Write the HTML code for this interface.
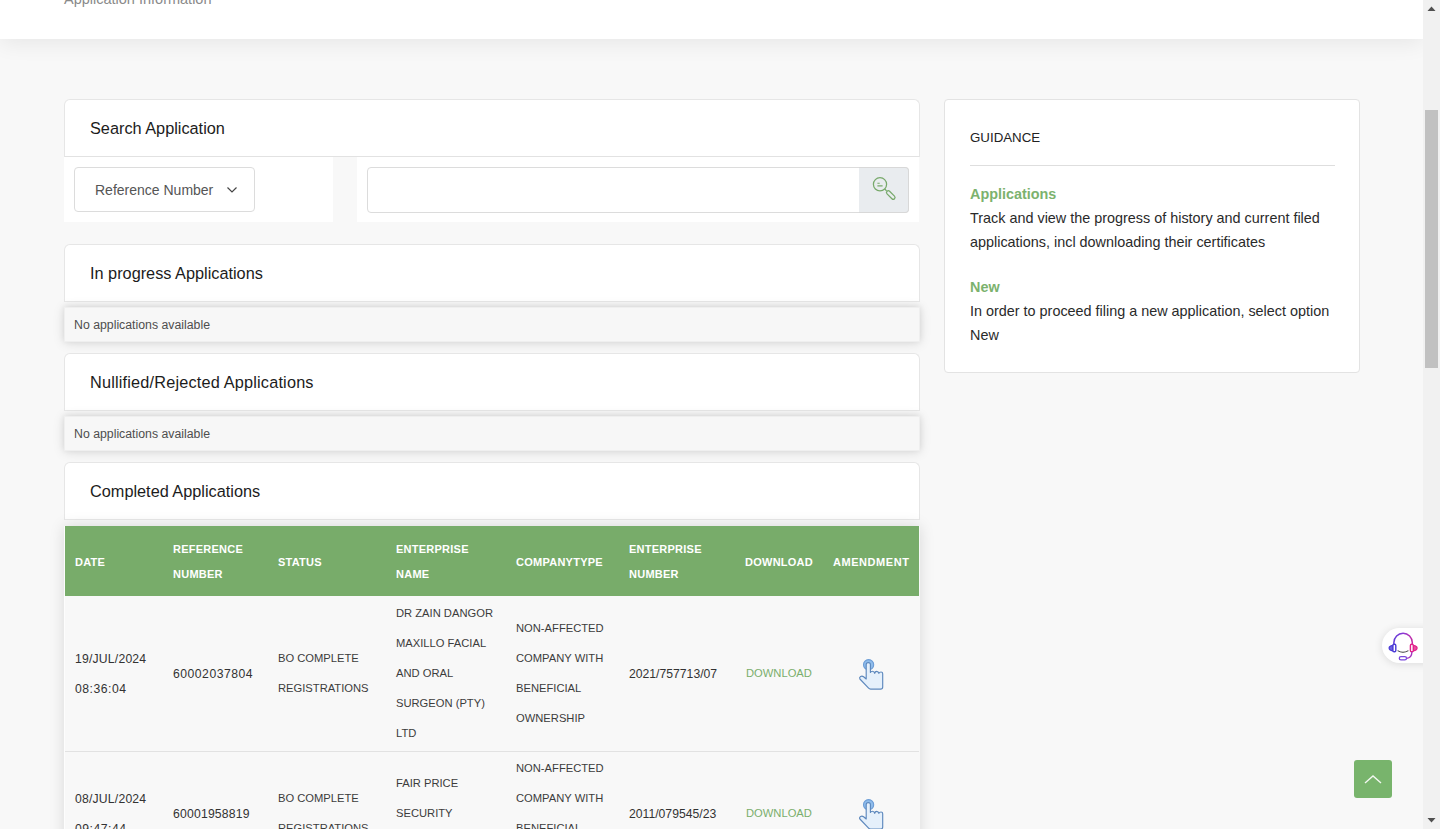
<!DOCTYPE html>
<html><head><meta charset="utf-8">
<style>
html,body{margin:0;padding:0;}
body{width:1440px;height:829px;overflow:hidden;position:relative;background:#f8f8f8;font-family:"Liberation Sans",sans-serif;color:#222;}
.abs{position:absolute;}
.t{position:absolute;white-space:nowrap;line-height:1;}
#hdr{left:0;top:0;width:1423px;height:39px;background:#fff;box-shadow:0 4px 22px rgba(0,0,0,0.075);}
.card{position:absolute;background:#fff;border:1px solid #e6e6e6;border-radius:6px 6px 0 0;box-sizing:border-box;}
.strip{position:absolute;background:#f7f7f7;box-shadow:0 1px 12px rgba(0,0,0,0.13),0 -1px 6px rgba(0,0,0,0.07);border:1px solid #efefef;box-sizing:border-box;}
.h{font-size:16.3px;color:#1c1c1c;}
.na{font-size:12.3px;color:#4e4e4e;}
.th{position:absolute;white-space:nowrap;line-height:1;font-size:11px;font-weight:700;color:#fff;letter-spacing:0.25px;}
.td{position:absolute;white-space:nowrap;line-height:1;font-size:12.2px;color:#333;}
.dg{letter-spacing:0.5px;}
.dt{letter-spacing:0.2px;}
.tu{position:absolute;white-space:nowrap;line-height:1;font-size:11.2px;color:#3c3c3c;}
.dl{color:#7aae6c;}
.gb{font-size:14.4px;font-weight:700;color:#7cb26e;}
.gt{font-size:14.4px;color:#2a2a2a;}
#sb{left:1423px;top:0;width:17px;height:829px;background:#f1f1f1;}
</style></head><body>

<div id="hdr" class="abs"><div class="t" style="left:64px;top:-8px;font-size:14.5px;color:#8a8a8a;">Application Information</div></div>

<!-- Search Application card -->
<div class="card" style="left:64px;top:99px;width:856px;height:58px;border-bottom-color:#e2e2e2;"></div>
<div class="t h" style="left:90px;top:120px;">Search Application</div>
<div class="abs" style="left:64px;top:157px;width:269px;height:65px;background:#fff;"></div>
<div class="abs" style="left:357px;top:157px;width:562px;height:65px;background:#fff;"></div>
<div class="abs" style="left:74px;top:167px;width:181px;height:45px;border:1px solid #dcdcdc;border-radius:4px;box-sizing:border-box;background:#fff;"></div>
<div class="t" style="left:95px;top:183px;font-size:14px;color:#555;">Reference Number</div>
<svg class="abs" style="left:226px;top:185px;" width="12" height="10" viewBox="0 0 12 10"><path d="M1.5 2.5 L6 7 L10.5 2.5" fill="none" stroke="#454545" stroke-width="1.2"/></svg>
<div class="abs" style="left:367px;top:167px;width:542px;height:46px;border:1px solid #dcdcdc;border-radius:4px;box-sizing:border-box;background:#fff;"></div>
<div class="abs" style="left:859px;top:167px;width:50px;height:46px;border:1px solid #d8d8d8;border-left:none;border-radius:0 4px 4px 0;box-sizing:border-box;background:#e9ecef;"></div>
<svg class="abs" style="left:862px;top:166px;" width="36" height="36" viewBox="0 0 36 36">
<circle cx="18" cy="18.3" r="6.6" fill="none" stroke="#78a96b" stroke-width="1.25"/>
<path d="M15.4 17.2h2.3 M15.4 19.9h5.2" stroke="#78a96b" stroke-width="1.1"/>
<path d="M22.7 23 L24.6 24.9" stroke="#78a96b" stroke-width="1.25"/>
<rect x="23.5" y="27.2" width="10.5" height="3.6" rx="1.8" transform="rotate(45 28.75 29)" fill="none" stroke="#78a96b" stroke-width="1.25"/>
</svg>

<!-- In progress -->
<div class="card" style="left:64px;top:244px;width:856px;height:58px;border-bottom-color:#e8e8e8;"></div>
<div class="t h" style="left:90px;top:265px;">In progress Applications</div>
<div class="strip" style="left:64px;top:307px;width:856px;height:35px;"></div>
<div class="t na" style="left:74px;top:319px;">No applications available</div>

<!-- Nullified -->
<div class="card" style="left:64px;top:353px;width:856px;height:58px;border-bottom-color:#e8e8e8;"></div>
<div class="t h" style="left:90px;top:374px;letter-spacing:0.18px;">Nullified/Rejected Applications</div>
<div class="strip" style="left:64px;top:416px;width:856px;height:35px;"></div>
<div class="t na" style="left:74px;top:428px;">No applications available</div>

<!-- Completed -->
<div class="card" style="left:64px;top:462px;width:856px;height:58px;border-bottom-color:#e8e8e8;"></div>
<div class="t h" style="left:90px;top:483px;">Completed Applications</div>

<!-- Guidance -->
<div class="abs" style="left:944px;top:99px;width:416px;height:274px;background:#fff;border:1px solid #e3e3e3;border-radius:4px;box-sizing:border-box;"></div>
<div class="t" style="left:970px;top:131px;font-size:13.3px;color:#222;">GUIDANCE</div>
<div class="abs" style="left:970px;top:165px;width:365px;height:1px;background:#dedede;"></div>


<!-- Table -->
<div class="abs" style="left:64px;top:526px;width:856px;height:320px;background:#f8f8f8;box-shadow:0 0 14px rgba(0,0,0,0.13);border-left:1px solid #fdfdfd;box-sizing:border-box;"></div>
<div class="abs" style="left:65px;top:526px;width:854px;height:70px;background:#78ac6a;"></div>
<div class="th" style="left:75px;top:557px;">DATE</div>
<div class="th" style="left:173px;top:544px;">REFERENCE</div>
<div class="th" style="left:173px;top:569px;">NUMBER</div>
<div class="th" style="left:278px;top:557px;">STATUS</div>
<div class="th" style="left:396px;top:544px;">ENTERPRISE</div>
<div class="th" style="left:396px;top:569px;">NAME</div>
<div class="th" style="left:516px;top:557px;">COMPANYTYPE</div>
<div class="th" style="left:629px;top:544px;">ENTERPRISE</div>
<div class="th" style="left:629px;top:569px;">NUMBER</div>
<div class="th" style="left:745px;top:557px;">DOWNLOAD</div>
<div class="th" style="left:833px;top:557px;letter-spacing:0.55px;">AMENDMENT</div>
<div class="abs" style="left:65px;top:751px;width:854px;height:1px;background:#e2e2e2;"></div>

<div class="td dt" style="left:75px;top:653px;">19/JUL/2024</div>
<div class="td dg" style="left:75px;top:683px;">08:36:04</div>
<div class="td dg" style="left:173px;top:668px;">60002037804</div>
<div class="tu" style="left:278px;top:653px;">BO COMPLETE</div>
<div class="tu" style="left:278px;top:683px;">REGISTRATIONS</div>
<div class="tu" style="left:396px;top:608px;">DR ZAIN DANGOR</div>
<div class="tu" style="left:396px;top:638px;">MAXILLO FACIAL</div>
<div class="tu" style="left:396px;top:668px;">AND ORAL</div>
<div class="tu" style="left:396px;top:698px;">SURGEON (PTY)</div>
<div class="tu" style="left:396px;top:728px;">LTD</div>
<div class="tu" style="left:516px;top:623px;">NON-AFFECTED</div>
<div class="tu" style="left:516px;top:653px;">COMPANY WITH</div>
<div class="tu" style="left:516px;top:683px;">BENEFICIAL</div>
<div class="tu" style="left:516px;top:713px;">OWNERSHIP</div>
<div class="td" style="left:629px;top:668px;">2021/757713/07</div>
<div class="tu dl" style="left:746px;top:668px;">DOWNLOAD</div>
<svg class="abs" style="left:855px;top:655px;" width="32" height="38" viewBox="0 0 32 38">
<circle cx="13.6" cy="9.7" r="5.1" fill="#8fbdec" stroke="#6d9dd6" stroke-width="1.1"/>
<path d="M15.4 17.3 L15.4 9.6 Q15.4 7.6 13.3 7.6 Q11.2 7.6 11.2 9.6 L11.2 24 L8.6 21.7 Q7.2 20.6 5.6 21.4 Q4 22.4 4.9 24 L13.6 33.2 Q14.4 34.1 15.6 34.1 L25.5 34.1 Q27.7 34.1 27.7 31.9 L27.7 18.7 Q27.7 17 26 17 Q24.3 17 23.9 18.4 Q23.5 16.3 21.7 16.3 Q20 16.3 19.7 18.3 Q19.3 16.2 17.5 16.2 Q15.8 16.2 15.4 17.5 Z" fill="#e5f0fb" stroke="#5d88bd" stroke-width="1.15" stroke-linejoin="round"/>
</svg>

<div class="td dt" style="left:75px;top:793px;">08/JUL/2024</div>
<div class="td dg" style="left:75px;top:823px;">09:47:44</div>
<div class="td" style="left:173px;top:808px;letter-spacing:0.2px;">60001958819</div>
<div class="tu" style="left:278px;top:793px;">BO COMPLETE</div>
<div class="tu" style="left:278px;top:823px;">REGISTRATIONS</div>
<div class="tu" style="left:396px;top:778px;">FAIR PRICE</div>
<div class="tu" style="left:396px;top:808px;">SECURITY</div>
<div class="tu" style="left:516px;top:763px;">NON-AFFECTED</div>
<div class="tu" style="left:516px;top:793px;">COMPANY WITH</div>
<div class="tu" style="left:516px;top:823px;">BENEFICIAL</div>
<div class="td" style="left:629px;top:808px;">2011/079545/23</div>
<div class="tu dl" style="left:746px;top:808px;">DOWNLOAD</div>
<svg class="abs" style="left:855px;top:795px;" width="32" height="38" viewBox="0 0 32 38">
<circle cx="13.6" cy="9.7" r="5.1" fill="#8fbdec" stroke="#6d9dd6" stroke-width="1.1"/>
<path d="M15.4 17.3 L15.4 9.6 Q15.4 7.6 13.3 7.6 Q11.2 7.6 11.2 9.6 L11.2 24 L8.6 21.7 Q7.2 20.6 5.6 21.4 Q4 22.4 4.9 24 L13.6 33.2 Q14.4 34.1 15.6 34.1 L25.5 34.1 Q27.7 34.1 27.7 31.9 L27.7 18.7 Q27.7 17 26 17 Q24.3 17 23.9 18.4 Q23.5 16.3 21.7 16.3 Q20 16.3 19.7 18.3 Q19.3 16.2 17.5 16.2 Q15.8 16.2 15.4 17.5 Z" fill="#e5f0fb" stroke="#5d88bd" stroke-width="1.15" stroke-linejoin="round"/>
</svg>

<div class="t gb" style="left:970px;top:187px;">Applications</div>
<div class="t gt" style="left:970px;top:211px;">Track and view the progress of history and current filed</div>
<div class="t gt" style="left:970px;top:235px;">applications, incl downloading their certificates</div>
<div class="t gb" style="left:970px;top:280px;">New</div>
<div class="t gt" style="left:970px;top:304px;">In order to proceed filing a new application, select option</div>
<div class="t gt" style="left:970px;top:328px;">New</div>

<div class="abs" style="left:1382px;top:628px;width:60px;height:35px;background:#fff;border-radius:18px 0 0 18px;box-shadow:0 1px 8px rgba(0,0,0,0.12);"></div>
<svg class="abs" style="left:1375px;top:620px;" width="50" height="50" viewBox="0 0 50 50">
<defs><linearGradient id="hg" gradientUnits="userSpaceOnUse" x1="14" y1="0" x2="42" y2="0"><stop offset="0" stop-color="#4a3ad6"/><stop offset="0.5" stop-color="#8a3ad6"/><stop offset="1" stop-color="#e1228c"/></linearGradient></defs>
<path d="M18.9 24.5 V22.6 A9.2 9.4 0 0 1 37.3 22.6 V24.5" fill="none" stroke="url(#hg)" stroke-width="1.5"/>
<path d="M17.9 25.3 Q14.1 25.8 14.1 28.1 Q14.1 30.4 17.9 30.9 Z" fill="#6d62e2" stroke="#4a3ad6" stroke-width="1.2" stroke-linejoin="round"/>
<rect x="17.9" y="24.2" width="2.9" height="7.6" rx="1.2" fill="#fff" stroke="#4a3ad6" stroke-width="1.4"/>
<path d="M38.3 25.3 Q42.1 25.8 42.1 28.1 Q42.1 30.4 38.3 30.9 Z" fill="#e64d9f" stroke="#e1228c" stroke-width="1.2" stroke-linejoin="round"/>
<rect x="35.4" y="24.2" width="2.9" height="7.6" rx="1.2" fill="#fff" stroke="#e1228c" stroke-width="1.4"/>
<path d="M22.6 30.6 Q28 33.8 33.4 30.6" fill="none" stroke="#3a3a3a" stroke-width="1.1"/>
<path d="M36.9 32 Q36.9 37.8 31.6 38.3" fill="none" stroke="#a42fbf" stroke-width="1.3"/>
<rect x="24.3" y="36.6" width="7.2" height="3.3" rx="1.65" fill="#fff" stroke="#7a48dc" stroke-width="1.3"/>
</svg>
<div class="abs" style="left:1354px;top:760px;width:38px;height:38px;background:#78b46c;border-radius:3px;"></div>
<svg class="abs" style="left:1354px;top:760px;" width="38" height="38" viewBox="0 0 38 38"><path d="M11 23 L19 16 L27 23" fill="none" stroke="rgba(255,255,255,0.9)" stroke-width="1.4"/></svg>
<!-- scrollbar -->
<div id="sb" class="abs"></div>
<div class="abs" style="left:1425px;top:110px;width:13px;height:258px;background:#c1c1c1;"></div>
<svg class="abs" style="left:1423px;top:0;" width="17" height="17" viewBox="0 0 17 17"><path d="M4.5 11 L8.5 6.5 L12.5 11 Z" fill="#505050"/></svg>
<svg class="abs" style="left:1423px;top:812px;" width="17" height="17" viewBox="0 0 17 17"><path d="M4.5 6 L8.5 10.5 L12.5 6 Z" fill="#505050"/></svg>

</body></html>
